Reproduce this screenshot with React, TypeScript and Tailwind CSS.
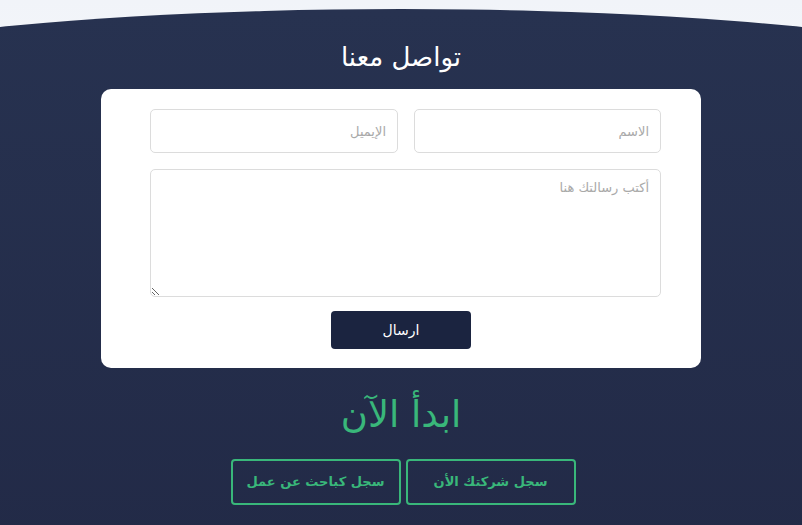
import React from "react";

export default function App() {
  return (
    <div
      dir="rtl"
      className="w-[802px] h-[525px] overflow-hidden bg-gradient-to-b from-[#f1f4f9] via-[#f7f8fa] via-[30%] to-[#fafafa] pt-[9px]"
      style={{ fontFamily: '"DejaVu Sans", sans-serif' }}
    >
      <div className="mx-[-299px] w-[1400px] h-[540px] rounded-t-[700px_100px] bg-gradient-to-b from-[#273250] to-[#222a47] flex flex-col items-center">
        <div className="w-[802px] flex flex-col items-center">
          <h2 className="mt-[30px] text-[26px] leading-[36px] text-white">تواصل معنا</h2>
          <div className="mt-[14px] w-[600px] bg-white rounded-[10px] pt-[20px] pb-[19px] pr-[40px] pl-[49px] flex flex-col">
            <div className="flex gap-[16px]">
              <input
                placeholder="الاسم"
                className="w-[247px] h-[44px] border border-[#dcdcdc] rounded-[5px] px-[11px] text-[13px] placeholder:text-[#a9a9a9] outline-none"
              />
              <input
                placeholder="الإيميل"
                className="w-[248px] h-[44px] border border-[#dcdcdc] rounded-[5px] px-[11px] text-[13px] placeholder:text-[#a9a9a9] outline-none"
              />
            </div>
            <textarea
              placeholder="أكتب رسالتك هنا"
              className="mt-[16px] w-[511px] h-[128px] border border-[#dcdcdc] rounded-[5px] px-[11px] py-[8px] text-[13px] placeholder:text-[#a9a9a9] outline-none"
            />
            <div className="mt-[14px] flex justify-center pr-[9px]">
              <button className="w-[140px] h-[38px] rounded-[4px] bg-[#1b2440] text-white text-[14px]">ارسال</button>
            </div>
          </div>
          <h2 className="mt-[22px] text-[37px] leading-[50px] text-[#39b77a]">ابدأ الآن</h2>
          <div className="mt-[19px] flex gap-[5px] pl-[4px]">
            <button className="w-[170px] h-[46px] rounded-[4px] border-2 border-[#39b77a] text-[#39b77a] text-[13px] font-bold">سجل شركتك الأن</button>
            <button className="w-[170px] h-[46px] rounded-[4px] border-2 border-[#39b77a] text-[#39b77a] text-[13px] font-bold">سجل كباحث عن عمل</button>
          </div>
        </div>
      </div>
    </div>
  );
}
